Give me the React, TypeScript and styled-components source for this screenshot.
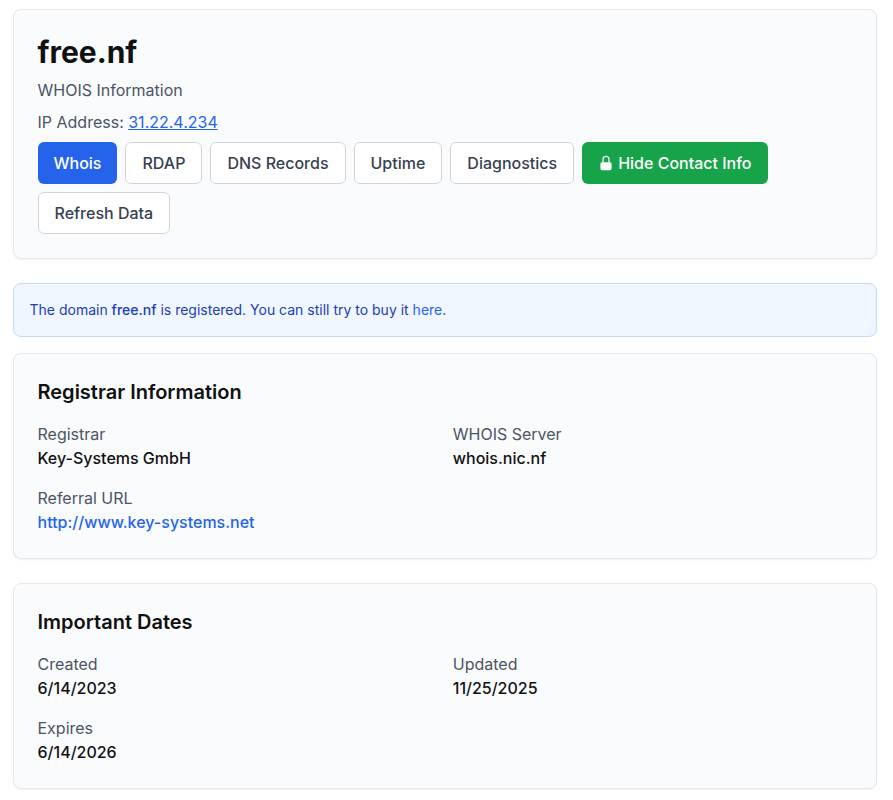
import React from 'react';
import styled, { createGlobalStyle } from 'styled-components';

const GlobalStyle = createGlobalStyle`
  body {
    margin: 0;
    background: #ffffff;
    font-family: Inter, "Liberation Sans", sans-serif;
  }
`;

const Page = styled.main`
  width: 864.5px;
  padding: 9px 0 0 12.5px;
`;

const Card = styled.section`
  background: #f9fbfd;
  border: 1px solid #e5e7eb;
  border-radius: 8px;
  box-shadow: 0 1px 2px rgba(0, 0, 0, 0.05);
  padding: 24px;
  margin-bottom: 24px;
`;

const DomainName = styled.h1`
  margin: 0 0 8px;
  font-size: 30px;
  line-height: 36px;
  font-weight: 700;
  color: #111111;
`;

const Subtitle = styled.p`
  margin: 0 0 8px;
  font-size: 16px;
  line-height: 24px;
  color: #4b5563;
`;

const IpLink = styled.a`
  color: #2563eb;
  text-decoration: underline;
`;

const Toolbar = styled.div`
  display: flex;
  flex-wrap: wrap;
  gap: 8px;
  margin-top: 8px;
`;

const TabButton = styled.button<{ $variant?: 'primary' | 'success' }>`
  display: inline-flex;
  align-items: center;
  gap: 4px;
  height: 42px;
  padding: 0 16px;
  border-radius: 6px;
  border: ${props => (props.$variant ? 'none' : '1px solid #d1d5db')};
  background: ${props =>
    props.$variant === 'primary' ? '#2563eb' : props.$variant === 'success' ? '#16a34a' : '#ffffff'};
  color: ${props => (props.$variant ? '#ffffff' : '#374151')};
  font-family: inherit;
  font-size: 16px;
  line-height: 24px;
  font-weight: ${props => (props.$variant ? 500 : 450)};
  cursor: pointer;
`;

const LockIcon = styled.svg`
  width: 16px;
  height: 16px;
  fill: currentColor;
`;

const Notice = styled.div`
  background: #eff6ff;
  border: 1px solid #bfdbfe;
  border-radius: 8px;
  padding: 16px;
  margin-bottom: 16px;
  font-size: 14px;
  line-height: 20px;
  color: #1e40af;
`;

const NoticeDomain = styled.span`
  font-weight: 500;
`;

const NoticeLink = styled.a`
  color: #2563eb;
  text-decoration: none;
`;

const SectionTitle = styled.h2`
  margin: 0 0 16px;
  font-size: 20px;
  line-height: 28px;
  font-weight: 600;
  color: #111111;
`;

const InfoGrid = styled.dl`
  display: grid;
  grid-template-columns: 1fr 1fr;
  gap: 16px;
  margin: 0;
`;

const InfoItem = styled.div``;

const InfoLabel = styled.dt`
  font-size: 16px;
  line-height: 24px;
  color: #4b5563;
`;

const InfoValue = styled.dd`
  margin: 0;
  font-size: 16px;
  line-height: 24px;
  font-weight: 450;
  color: #111111;
`;

const InfoLink = styled.a`
  color: #2563eb;
  text-decoration: none;
`;

const tabs = ['RDAP', 'DNS Records', 'Uptime', 'Diagnostics'];

const App: React.FC = () => (
  <Page>
    <GlobalStyle />
    <Card>
      <DomainName>free.nf</DomainName>
      <Subtitle>WHOIS Information</Subtitle>
      <Subtitle>
        IP Address: <IpLink href="#">31.22.4.234</IpLink>
      </Subtitle>
      <Toolbar>
        <TabButton $variant="primary">Whois</TabButton>
        {tabs.map(tab => (
          <TabButton key={tab}>{tab}</TabButton>
        ))}
        <TabButton $variant="success">
          <LockIcon viewBox="0 0 20 20">
            <path
              fillRule="evenodd"
              clipRule="evenodd"
              d="M10 1a4.5 4.5 0 00-4.5 4.5V9H5a2 2 0 00-2 2v6a2 2 0 002 2h10a2 2 0 002-2v-6a2 2 0 00-2-2h-.5V5.5A4.5 4.5 0 0010 1zm3 8V5.5a3 3 0 10-6 0V9h6z"
            />
          </LockIcon>
          Hide Contact Info
        </TabButton>
        <TabButton>Refresh Data</TabButton>
      </Toolbar>
    </Card>

    <Notice>
      The domain <NoticeDomain>free.nf</NoticeDomain> is registered. You can still try to buy it{' '}
      <NoticeLink href="#">here</NoticeLink>.
    </Notice>

    <Card>
      <SectionTitle>Registrar Information</SectionTitle>
      <InfoGrid>
        <InfoItem>
          <InfoLabel>Registrar</InfoLabel>
          <InfoValue>Key-Systems GmbH</InfoValue>
        </InfoItem>
        <InfoItem>
          <InfoLabel>WHOIS Server</InfoLabel>
          <InfoValue>whois.nic.nf</InfoValue>
        </InfoItem>
        <InfoItem>
          <InfoLabel>Referral URL</InfoLabel>
          <InfoValue>
            <InfoLink href="#">http://www.key-systems.net</InfoLink>
          </InfoValue>
        </InfoItem>
      </InfoGrid>
    </Card>

    <Card>
      <SectionTitle>Important Dates</SectionTitle>
      <InfoGrid>
        <InfoItem>
          <InfoLabel>Created</InfoLabel>
          <InfoValue>6/14/2023</InfoValue>
        </InfoItem>
        <InfoItem>
          <InfoLabel>Updated</InfoLabel>
          <InfoValue>11/25/2025</InfoValue>
        </InfoItem>
        <InfoItem>
          <InfoLabel>Expires</InfoLabel>
          <InfoValue>6/14/2026</InfoValue>
        </InfoItem>
      </InfoGrid>
    </Card>
  </Page>
);

export default App;
